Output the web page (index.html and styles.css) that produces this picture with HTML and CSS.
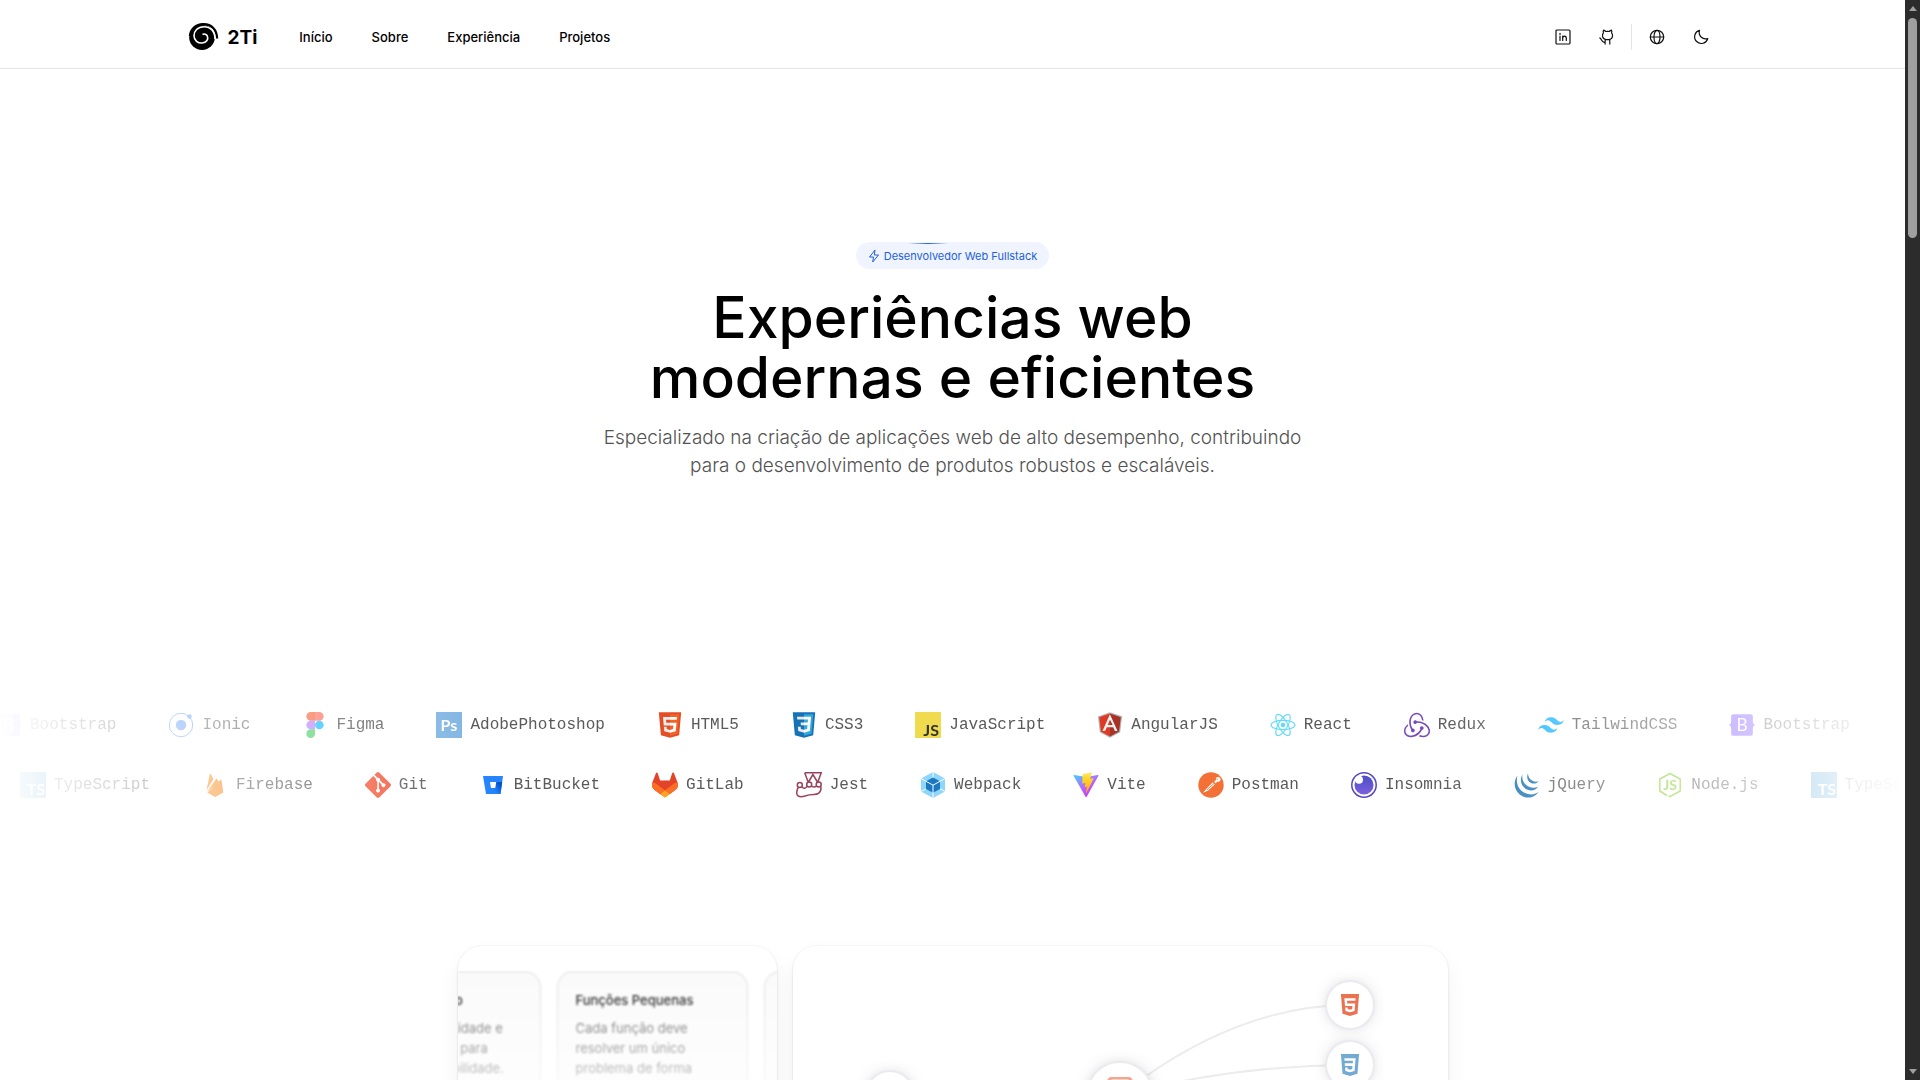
FILE: index.html
```
<!DOCTYPE html>
<html lang="pt-BR">
<head>
<meta charset="utf-8">
<meta name="viewport" content="width=device-width, initial-scale=1">
<title>2Ti</title>
<link rel="stylesheet" href="styles.css">
</head>
<body>
<svg class="sprite" aria-hidden="true">
  <defs>
    <linearGradient id="viteBody" x1="0" y1="0" x2="0.7" y2="1"><stop offset="0" stop-color="#41d1ff"/><stop offset="0.6" stop-color="#bd60fe"/><stop offset="1" stop-color="#bd34fe"/></linearGradient>
    <linearGradient id="viteBolt" x1="0" y1="0" x2="0" y2="1"><stop offset="0" stop-color="#ffea83"/><stop offset="0.2" stop-color="#ffdd35"/><stop offset="1" stop-color="#ffa800"/></linearGradient>
    <linearGradient id="insomniaFill" x1="0" y1="0" x2="0" y2="1"><stop offset="0" stop-color="#4a4fc4"/><stop offset="1" stop-color="#7d5fe0"/></linearGradient>
    <linearGradient id="bucketFill" x1="1" y1="0.3" x2="0.4" y2="0.8"><stop offset="0.1" stop-color="#0052cc"/><stop offset="1" stop-color="#2684ff"/></linearGradient>
  </defs>
  <symbol id="ionic" viewBox="0 0 26 26"><circle cx="13" cy="13" r="11.700" fill="none" stroke="#4f8ef7"/><circle cx="13" cy="13" r="5.200" fill="#4f8ef7"/><circle cx="21.500" cy="4.500" r="2.200" fill="#4f8ef7"/></symbol>
  <symbol id="figma" viewBox="0 0 26 26"><path fill="#f24e1e" fill-opacity=".85" d="M13 0H8.700a4.330 4.330 0 0 0 0 8.670H13z"/><path fill="#ff7262" d="M13 0h4.300a4.330 4.330 0 0 1 0 8.670H13z"/><path fill="#a259ff" fill-opacity=".75" d="M13 8.670H8.700a4.330 4.330 0 0 0 0 8.660H13z"/><circle cx="17.330" cy="13" r="4.330" fill="#1abcfe"/><path fill="#52cf72" d="M8.700 17.330H13v4.340a4.330 4.330 0 1 1-4.300-4.340z"/></symbol>
  <symbol id="html5" viewBox="0 0 128 128"><path fill="#E44D26" d="M19.037 113.876L9.032 1.661h109.936l-10.016 112.198-45.019 12.480z"/><path fill="#F16529" d="M64 116.800l36.378-10.086 8.559-95.878H64z"/><path fill="#EBEBEB" d="M64 52.455H45.788L44.530 38.361H64V24.599H29.489l.33 3.692 3.382 37.927H64zm0 35.743l-.061.017-15.327-4.140-.979-10.975H33.816l1.928 21.609 28.193 7.826.063-.017z"/><path fill="#fff" d="M63.952 52.455v13.763h16.947l-1.597 17.849-15.350 4.143v14.319l28.215-7.820.207-2.325 3.234-36.233.335-3.696h-3.708zm0-27.856v13.762h33.244l.276-3.092.628-6.978.329-3.692z"/></symbol>
  <symbol id="css3" viewBox="0 0 128 128"><path fill="#1572B6" d="M18.814 114.123L8.760 1.352h110.480l-10.064 112.754-45.243 12.543-45.119-12.526z"/><path fill="#33A9DC" d="M64.001 117.062l36.559-10.136 8.601-96.354h-45.160v106.490z"/><path fill="#fff" d="M64.001 51.429h18.302l1.264-14.163H64.001V23.435h34.682l-.332 3.711-3.400 38.114h-30.950V51.429z"/><path fill="#EBEBEB" d="M64.083 87.349l-.061.018-15.403-4.159-.985-11.031H33.752l1.937 21.717 28.331 7.863.063-.018v-14.390z"/><path fill="#fff" d="M81.127 64.675l-1.666 18.522-15.426 4.164v14.390l28.354-7.858.208-2.337 2.406-26.881H81.127z"/><path fill="#EBEBEB" d="M64.048 23.435v13.831H30.640l-.277-3.108-.630-7.012-.331-3.711h34.646zm-.047 27.996v13.831H48.792l-.277-3.108-.631-7.012-.330-3.711h16.447z"/></symbol>
  <symbol id="shield5" viewBox="0 0 22 24"><path fill="#e34f26" fill-opacity=".8" fill-rule="evenodd" d="M1 0h20l-1.800 21.500L11 24l-8.200-2.500zM4.800 4.500l.7 8.500h8.200l-.3 3.500-2.400.7-2.500-.7-.2-1.700H5.700l.3 3.700 5 1.500 5-1.500.8-8.200H8l-.2-3h9.100l.2-2.800z"/></symbol>
  <symbol id="shield3" viewBox="0 0 22 24"><path fill="#1572b6" fill-opacity=".6" fill-rule="evenodd" d="M1 0h20l-1.800 21.500L11 24l-8.200-2.500zM4.800 4.500l.2 2.800h9.300l-.3 2.700H5.200l.2 3h8.300l-.3 3.500-2.400.7-2.500-.7-.2-1.700H5.700l.3 3.700 5 1.500 5-1.500 1.200-14z"/></symbol>
  <symbol id="angular" viewBox="0 0 128 128"><path fill="#b3b3b3" d="M63.810 1.026L4.553 21.880l9.363 77.637 49.957 27.457 50.214-27.828L123.447 21.510z"/><path fill="#a83225" d="M117.536 25.998L63.672 7.629v112.785l45.141-24.983z"/><path fill="#dd3a26" d="M11.201 26.329l8.026 69.434 44.444 24.651V7.628z"/><path fill="#f2f2f2" d="M63.700 11.500L27 93l13.700-.300L48 74.600h32l8 18.600 13 .300zM63.700 37.600L77 63.700H52.700z" fill-rule="evenodd"/></symbol>
  <symbol id="react" viewBox="0 0 26 26"><g fill="none" stroke="#61dafb" stroke-width="1.100"><ellipse cx="13" cy="13" rx="12" ry="4.600"/><ellipse cx="13" cy="13" rx="12" ry="4.600" transform="rotate(60 13 13)"/><ellipse cx="13" cy="13" rx="12" ry="4.600" transform="rotate(120 13 13)"/></g><circle cx="13" cy="13" r="2.300" fill="#61dafb"/></symbol>
  <symbol id="redux" viewBox="0 0 24 24"><path fill="#764abc" d="M16.634 16.504c.87-.075 1.543-.84 1.500-1.754-.047-.914-.796-1.648-1.709-1.648h-.061c-.943.03-1.678.82-1.648 1.770.03.479.226.869.494 1.153-1.048 2.038-2.621 3.535-5.005 4.795-1.603.838-3.296 1.154-4.944.93-1.378-.195-2.456-.81-3.116-1.799-.988-1.499-1.078-3.116-.255-4.734.601-1.166 1.499-2.023 2.099-2.443-.15-.389-.33-1.048-.42-1.542-4.436 3.177-3.985 7.521-2.637 9.574 1.004 1.498 3.057 2.456 5.304 2.456.599 0 1.230-.044 1.843-.194 3.897-.749 6.848-3.086 8.541-6.532zm5.348-3.746c-2.320-2.728-5.738-4.226-9.634-4.226h-.51c-.253-.554-.837-.899-1.498-.899h-.045c-.943 0-1.678.81-1.647 1.753.03.898.794 1.648 1.708 1.648h.074c.675-.03 1.259-.45 1.498-1.049h.555c2.309 0 4.495.674 6.488 1.992 1.527 1.004 2.622 2.322 3.236 3.896.538 1.288.509 2.547-.045 3.597-.855 1.647-2.294 2.517-4.196 2.517-1.199 0-2.367-.375-2.967-.644-.36.298-.96.793-1.394 1.093 1.318.598 2.652.943 3.940.943 2.922 0 5.093-1.647 5.918-3.236.898-1.798.824-4.824-1.470-7.416zM6.490 17.042c.03.899.793 1.648 1.708 1.648h.06c.959-.03 1.693-.82 1.648-1.768 0-.9-.779-1.647-1.693-1.647h-.06c-.06 0-.149 0-.226.029-1.243-2.098-1.768-4.347-1.572-6.772.12-1.828.72-3.417 1.797-4.735.899-1.124 2.593-1.680 3.746-1.708 3.236-.061 4.585 3.971 4.689 5.574l1.498.45c-.345-4.914-3.400-7.492-6.322-7.492-2.742 0-5.273 1.993-6.293 4.915-1.393 3.896-.479 7.641 1.229 10.638-.149.195-.239.539-.209.868z"/></symbol>
  <symbol id="tailwind" viewBox="0 0 24 24"><path fill="#19b5fe" d="M12.001 4.800c-3.200 0-5.200 1.600-6 4.800 1.200-1.600 2.600-2.200 4.200-1.800.913.228 1.565.89 2.288 1.624C13.666 10.618 15.027 12 18.001 12c3.200 0 5.200-1.600 6-4.800-1.200 1.600-2.600 2.200-4.200 1.800-.913-.228-1.565-.89-2.288-1.624C16.337 6.182 14.976 4.800 12.001 4.800zM6.001 12c-3.200 0-5.200 1.600-6 4.800 1.200-1.600 2.600-2.200 4.200-1.800.913.228 1.565.89 2.288 1.624 1.177 1.194 2.538 2.576 5.512 2.576 3.200 0 5.200-1.600 6-4.800-1.200 1.600-2.600 2.200-4.200 1.800-.913-.228-1.565-.89-2.288-1.624C10.337 13.382 8.976 12 6.001 12z"/></symbol>
  <symbol id="firebase" viewBox="0 0 26 26"><path fill="#f5820b" d="M4.500 18.500L7.700 2.200q.5-1 1.100 0L11.500 7zM5 19.800L14.200 7q.5-.9 1 0l1.500 3zM5.300 20.600L18.500 7.700q.8-.5 1 .4l1.800 12.500-7.200 3.800q-1 .5-2 0z"/></symbol>
  <symbol id="git" viewBox="0 0 24 24"><path fill="#f3583a" d="M23.546 10.930L13.067.452c-.604-.603-1.582-.603-2.188 0L8.708 2.627l2.760 2.760c.645-.215 1.379-.07 1.889.441.516.515.658 1.258.438 1.900l2.658 2.660c.645-.223 1.387-.078 1.900.435.721.72.721 1.884 0 2.604-.719.719-1.881.719-2.600 0-.539-.541-.674-1.337-.404-1.996L12.860 8.955v6.525c.176.086.342.203.488.348.713.721.713 1.883 0 2.600-.719.721-1.889.721-2.609 0-.719-.719-.719-1.879 0-2.598.182-.18.387-.316.605-.406V8.835c-.217-.091-.424-.222-.6-.401-.545-.545-.676-1.342-.396-2.009L7.636 3.700.45 10.881c-.6.605-.6 1.584 0 2.189l10.480 10.477c.604.604 1.582.604 2.186 0l10.430-10.430c.605-.603.605-1.582 0-2.187"/></symbol>
  <symbol id="bitbucket" viewBox="0 0 26 26"><path fill="#2684ff" d="M3 4h20l-2.500 18H6z"/><path fill="url(#bucketFill)" d="M22.200 10h-6l-1 6-5.200 6h10.500z"/><path fill="#fff" d="M10 10h6.200l-1 6h-4.200z"/></symbol>
  <symbol id="gitlab" viewBox="0 0 25 24"><path fill="#e24329" d="M24.507 9.500l-.034-.09L21.082.562a.896.896 0 0 0-1.694.091l-2.290 7.010H7.825L5.535.653a.898.898 0 0 0-1.694-.09L.451 9.411.416 9.500a6.297 6.297 0 0 0 2.090 7.278l5.202 3.899 4.742 3.100 4.743-3.100 5.225-3.900A6.297 6.297 0 0 0 24.507 9.500z"/><path fill="#fc6d26" d="M24.507 9.500l-.034-.09a11.440 11.440 0 0 0-4.560 2.051l-7.447 5.632 4.742 3.584 5.211-3.900A6.297 6.297 0 0 0 24.507 9.500z"/><path fill="#fca326" d="M7.707 20.677l4.115 3.111a1.051 1.051 0 0 0 1.268 0l4.115-3.111-4.743-3.584z"/><path fill="#fc6d26" d="M5.010 11.461a11.430 11.430 0 0 0-4.560-2.050L.416 9.500a6.297 6.297 0 0 0 2.090 7.278l5.202 3.899 4.745-3.584z"/></symbol>
  <symbol id="jest" viewBox="0 0 26 26"><g fill="none" stroke="#99425b" stroke-width="1.500"><path d="M8.700.8h16.500l-3.500 9.800M8.700.8l3.700 10M12.500 10l4.400-7.500 4.600 7.500"/><circle cx="3.800" cy="13" r="2.500"/><circle cx="13.200" cy="12.600" r="2.500"/><circle cx="22.700" cy="12.600" r="2.500"/><path d="M2.500 15Q0 19 1 22.500q1.500 3.500 8 1.500 4-1.500 9-1.500 6 0 7-5.500.3-2-1-3M11.200 14Q9 18 5.700 15M15.500 14q2.500 2 5 0"/></g></symbol>
  <symbol id="webpack" viewBox="0 0 26 26"><path fill="#8ed6fb" d="M13 0l12 6.500v13L13 26 1 19.500v-13z"/><path fill="#1c78c0" d="M13 5.500l7 3.800v7.600l-7 3.800-7-3.800V9.300z"/><path fill="none" stroke="#fff" d="M1 6.500l12 6.700 12-6.700M13 13.200V26M13 0v5.500M1 19.500l5-2.700M25 19.500l-5-2.700"/></symbol>
  <symbol id="vite" viewBox="0 0 410 404"><path fill="url(#viteBody)" d="M399.641 59.525L215.643 388.545C211.844 395.338 202.084 395.378 198.228 388.618L10.582 59.556C6.381 52.190 12.680 43.267 21.028 44.759L205.223 77.682C206.398 77.892 207.601 77.890 208.776 77.676L389.119 44.806C397.439 43.289 403.768 52.143 399.641 59.525Z"/><path fill="url(#viteBolt)" d="M292.965 1.574L156.801 28.255C154.563 28.694 152.906 30.590 152.771 32.866L144.395 174.330C144.198 177.662 147.258 180.248 150.510 179.498L188.420 170.749C191.967 169.931 195.172 173.055 194.443 176.622L183.180 231.775C182.422 235.487 185.907 238.661 189.532 237.560L212.947 230.446C216.577 229.344 220.065 232.527 219.297 236.242L201.398 322.875C200.278 328.294 207.486 331.249 210.492 326.603L212.500 323.500L323.454 102.072C325.312 98.365 322.108 94.137 318.036 94.923L279.014 102.454C275.347 103.161 272.227 99.746 273.262 96.158L298.731 7.867C299.767 4.273 296.636.855 292.965 1.574Z"/></symbol>
  <symbol id="postman" viewBox="0 0 26 26"><circle cx="13" cy="13" r="12.700" fill="#f37036"/><path fill="#fff" d="M5 20.800l3-3.600 6.800-6.900 2 1.900-6.900 6.500zM16 9.300l2-1a2.400 2.400 0 1 1 1.300 1.300l-1.600 1.900z"/><path fill="none" stroke="#f37036" stroke-width=".8" d="M9 17.800l7-6.500M18.500 7.500l1.500-.5"/></symbol>
  <symbol id="insomnia" viewBox="0 0 26 26"><circle cx="13" cy="13" r="12.200" fill="#fff" stroke="#5849be" stroke-width="1.500"/><circle cx="13" cy="13" r="9.500" fill="url(#insomniaFill)"/><circle cx="8" cy="7.800" r="4" fill="#fff"/></symbol>
  <symbol id="jquery" viewBox="0 0 26 26"><g fill="#1b75b2"><path d="M3.500 3.500C-2 11 1 21 9 24.500c6 2.600 12.500.3 15.500-4.500-4 3-9 3.200-13.500 1C4 17.500 1.500 10.500 3.500 3.500z"/><path d="M8.500 2.500C5 8 7.500 15 13 17.500c4.500 2 9 .5 11-2.800-3 1.500-6 1.500-9.500-.2C9.500 12 7.500 7.500 8.500 2.500z"/><path d="M14 1.500c-2 4 0 8 3 9.500 3 1.200 6 .5 7.500-1.700-2 .7-4 .5-6-.5C15.500 7.200 14 4.500 14 1.500z"/></g></symbol>
</svg>

<div class="window">
  <div class="page">
    <header class="site-header">
      <div class="header-inner">
        <a class="brand" href="#">
          <svg viewBox="4 4 32 30" aria-hidden="true"><ellipse cx="18" cy="19.500" rx="12.800" ry="12.500"/><path d="M6 18A12.800 13 0 0 1 19 6.200C27.500 5.800 33 12 33 20.500" fill="none" stroke="#000" stroke-width="2.400"/><path d="M31 21C31 13.500 26.500 8.700 20 8.700 13.500 8.700 10 13 10 17.800c0 4.700 4 7.600 8.300 7.200 4-.4 6.200-3.600 5.200-6.500-.7-2.300-3.300-3.200-5-2" fill="none" stroke="#fff" stroke-width="1.600"/></svg>
          <span>2Ti</span>
        </a>
        <nav class="main-nav">
          <a href="#">Início</a>
          <a href="#">Sobre</a>
          <a href="#">Experiência</a>
          <a href="#">Projetos</a>
        </nav>
        <div class="actions">
          <a class="icon-btn" href="#" aria-label="LinkedIn"><svg viewBox="0 0 16 16"><rect x="1" y="1" width="14" height="14" rx="1"/><path d="M5 7v4.500M5 4.300v1.200M7.700 7v4.500M7.700 9.200c0-2.800 3.600-2.800 3.600 0v2.300"/></svg></a>
          <a class="icon-btn" href="#" aria-label="GitHub"><svg viewBox="1 0 16 16"><path d="M5.500 1.200c1 .2 1.700.7 2.300 1.300q1.700-.4 3.400 0c.6-.6 1.300-1.100 2.300-1.300.4 1 .4 1.900.1 2.700.8 1 1.200 2.100.9 3.500-.4 2-2 3-3.500 3.200H8C6.500 10.400 4.900 9.400 4.500 7.400c-.2-1.400.1-2.500.9-3.500-.3-.8-.3-1.700.1-2.700zM11.300 10.600q.5.500.5 1.500v3M7.700 10.600q-.6.600-.6 1.500v3M7 13.200c-3.500.8-2.800-3.200-5.200-4.300"/></svg></a>
          <span class="divider"></span>
          <button class="icon-btn" type="button" aria-label="Idioma"><svg viewBox="0 0 16 16"><circle cx="8" cy="8" r="6.700"/><ellipse cx="8" cy="8" rx="3" ry="6.700"/><path d="M1.300 8h13.400"/></svg></button>
          <button class="icon-btn" type="button" aria-label="Tema escuro"><svg viewBox="0 0 16 16"><path d="M6.500 1.300A6.700 6.700 0 1 0 14.800 9.500C9.500 11 5 6.700 6.500 1.300z"/></svg></button>
        </div>
      </div>
    </header>

    <main>
      <section class="hero">
        <p class="badge"><svg viewBox="0 0 12 14" aria-hidden="true"><path d="M7 1L1.500 8H5.500L4.700 13 10.500 6H6.300z"/></svg>Desenvolvedor Web Fullstack</p>
        <h1>Experiências web<br>modernas e eficientes</h1>
        <p class="lead">Especializado na criação de aplicações web de alto desempenho, contribuindo<br>para o desenvolvimento de produtos robustos e escaláveis.</p>
      </section>

      <section class="marquee" aria-label="Tecnologias">
        <ul class="track track-first">
          <li><svg viewBox="1 1 24 24"><path fill="#7748ff" d="M5 3h16q2 0 2 2v5q0 2 2 3q-2 1-2 3v5q0 2-2 2H5q-2 0-2-2v-5q0-2-2-3q2-1 2-3V5q0-2 2-2z"/><text class="glyph glyph-light" x="13" y="19" text-anchor="middle">B</text></svg>Bootstrap</li>
          <li><svg><use href="#ionic"/></svg>Ionic</li>
          <li><svg><use href="#figma"/></svg>Figma</li>
          <li><svg viewBox="0 0 26 26"><path fill="#80b5e2" d="M0 0h26v26H0z"/><text class="glyph" x="13" y="19" text-anchor="middle">Ps</text></svg>AdobePhotoshop</li>
          <li><svg><use href="#html5"/></svg>HTML5</li>
          <li><svg><use href="#css3"/></svg>CSS3</li>
          <li><svg viewBox="0 0 26 26"><path fill="#f0db4f" d="M0 0h26v26H0z"/><text class="glyph glyph-dark" x="24" y="24" text-anchor="end">JS</text></svg>JavaScript</li>
          <li><svg><use href="#angular"/></svg>AngularJS</li>
          <li><svg><use href="#react"/></svg>React</li>
          <li><svg><use href="#redux"/></svg>Redux</li>
          <li><svg><use href="#tailwind"/></svg>TailwindCSS</li>
          <li><svg viewBox="1 1 24 24"><path fill="#7748ff" d="M5 3h16q2 0 2 2v5q0 2 2 3q-2 1-2 3v5q0 2-2 2H5q-2 0-2-2v-5q0-2-2-3q2-1 2-3V5q0-2 2-2z"/><text class="glyph glyph-light" x="13" y="19" text-anchor="middle">B</text></svg>Bootstrap</li>
        </ul>
        <ul class="track track-second">
          <li><svg viewBox="0 0 26 26"><path fill="#2a8fd0" d="M0 0h26v26H0z"/><text class="glyph" x="25" y="23" text-anchor="end">TS</text></svg>TypeScript</li>
          <li><svg><use href="#firebase"/></svg>Firebase</li>
          <li><svg><use href="#git"/></svg>Git</li>
          <li><svg><use href="#bitbucket"/></svg>BitBucket</li>
          <li><svg><use href="#gitlab"/></svg>GitLab</li>
          <li><svg><use href="#jest"/></svg>Jest</li>
          <li><svg><use href="#webpack"/></svg>Webpack</li>
          <li><svg><use href="#vite"/></svg>Vite</li>
          <li><svg><use href="#postman"/></svg>Postman</li>
          <li><svg><use href="#insomnia"/></svg>Insomnia</li>
          <li><svg><use href="#jquery"/></svg>jQuery</li>
          <li><svg viewBox="0 0 26 26"><path fill="none" stroke="#83cd29" stroke-width="1.500" stroke-linejoin="round" d="M10 23.500L2.800 19V7L13 1.500 23.200 7v12L13 24.700l-1.500-.8"/><text class="glyph glyph-green" x="13" y="18" text-anchor="middle">JS</text></svg>Node.js</li>
          <li><svg viewBox="0 0 26 26"><path fill="#2a8fd0" d="M0 0h26v26H0z"/><text class="glyph" x="25" y="23" text-anchor="end">TS</text></svg>TypeScript</li>
        </ul>
      </section>

      <section class="bento">
        <article class="panel panel-notes">
          <div class="notes">
            <div class="note"><h3>Documentação</h3><p>Garanta a qualidade e<br>a consistência para<br>boa manutenibilidade.</p></div>
            <div class="note"><h3>Funções Pequenas</h3><p>Cada função deve<br>resolver um único<br>problema de forma</p></div>
            <div class="note"></div>
          </div>
        </article>
        <article class="panel panel-stack">
          <div class="diagram">
            <svg class="beams" viewBox="0 0 510 230" preserveAspectRatio="none" aria-hidden="true"><path d="M25 115H255M255 115Q370 25 485 25M255 115Q370 85 485 85M255 115Q370 145 485 145M255 115Q370 205 485 205"/></svg>
            <span class="node"></span>
            <span class="node node-large"><svg viewBox="0 0 36 36" aria-hidden="true"><rect x="6" y="1" width="24" height="34" rx="5"/><path d="M18 4v28"/></svg></span>
            <div class="node-column">
              <span class="node"><svg><use href="#shield5"/></svg></span>
              <span class="node"><svg><use href="#shield3"/></svg></span>
              <span class="node"></span>
              <span class="node"></span>
            </div>
          </div>
        </article>
      </section>
    </main>
  </div>
  <div class="scrollbar" aria-hidden="true">
    <span class="arrow arrow-up"></span>
    <span class="thumb"></span>
    <span class="arrow arrow-down"></span>
  </div>
</div>
</body>
</html>
```
FILE: styles.css
```
* { box-sizing: border-box; }
body {
  margin: 0;
  font-family: Inter, "Open Sans", sans-serif;
  color: #000;
  background: #fff;
}
h1, h3, p, ul { margin: 0; padding: 0; }
a { color: inherit; text-decoration: none; }
.sprite { display: block; width: 0; height: 0; }

.window {
  display: grid;
  grid-template-columns: minmax(0, 1fr) 15px;
  height: 100vh;
  overflow: hidden;
}
.page { overflow: hidden; }

/* header */
.site-header { border-bottom: 1px solid #e4e4ec; }
.header-inner {
  display: flex;
  align-items: center;
  max-width: 1536px;
  height: 68px;
  margin: 0 auto;
  padding-top: 6px;
  padding-left: 3px;
}
.brand {
  display: flex;
  align-items: center;
  gap: 8px;
  font-size: 19px;
  font-weight: 700;
}
.brand svg { width: 32px; height: 30px; }
.main-nav {
  display: flex;
  gap: 39px;
  margin-left: 42px;
  font-size: 13px;
  font-weight: 500;
}
.actions {
  display: flex;
  align-items: center;
  gap: 4px;
  margin-left: auto;
}
.icon-btn {
  display: grid;
  place-items: center;
  width: 40px;
  height: 40px;
  padding: 0;
  border: 0;
  background: none;
}
.icon-btn svg {
  width: 16px;
  height: 16px;
  fill: none;
  stroke: #111;
  stroke-width: 1.2;
  stroke-linecap: round;
  stroke-linejoin: round;
}
.divider { width: 1px; height: 26px; margin-right: 1px; background: #e4e4e7; }

/* hero */
.hero {
  display: flex;
  flex-direction: column;
  align-items: center;
  padding-top: 173px;
  text-align: center;
}
.badge {
  position: relative;
  display: flex;
  align-items: center;
  gap: 4px;
  height: 27px;
  padding: 0 12px;
  border-radius: 14px;
  background: #eff4ff;
  color: #2460d8;
  font-size: 11px;
}
.badge::before {
  content: "";
  position: absolute;
  top: 1px;
  left: 52px;
  width: 40px;
  height: 1px;
  background: linear-gradient(to right, transparent, #2460d8, transparent);
}
.badge svg { width: 12px; height: 14px; fill: none; stroke: currentColor; stroke-linejoin: round; }
h1 {
  margin-top: 19px;
  font-size: 57px;
  font-weight: 500;
  line-height: 60px;
}
.lead {
  margin-top: 16px;
  color: #525252;
  font-size: 19px;
  font-weight: 300;
  line-height: 28px;
}

/* technologies */
.marquee {
  display: grid;
  gap: 34px;
  margin-top: 232px;
  overflow: hidden;
  -webkit-mask-image: linear-gradient(to right, transparent, #000 25%, #000 75%, transparent);
  mask-image: linear-gradient(to right, transparent, #000 25%, #000 75%, transparent);
}
.track {
  display: flex;
  gap: 52px;
  list-style: none;
  color: #5a5a5a;
  font-family: "Liberation Mono", monospace;
  font-size: 16px;
  line-height: 24px;
}
.track-first { margin-left: -4px; }
.track-second { margin-left: 20px; }
.track li { display: flex; align-items: center; flex: none; gap: 8px; height: 26px; }
.track svg { width: 26px; height: 26px; }
.glyph { fill: #fff; font-family: Lato, "Open Sans", sans-serif; font-size: 16px; font-weight: 700; }
.glyph-light { font-weight: 400; }
.glyph-dark { fill: #323330; }
.glyph-green { fill: #83cd29; font-size: 14px; }

/* cards */
.bento {
  display: grid;
  grid-template-columns: repeat(3, minmax(0, 1fr));
  gap: 16px;
  max-width: 990px;
  margin: 148px auto 0;
}
.panel {
  height: 352px;
  overflow: hidden;
  border-radius: 24px;
  background: #fff;
  box-shadow: 0 0 0 1px rgba(0, 0, 0, .03), 0 2px 4px rgba(0, 0, 0, .05), 0 12px 24px rgba(0, 0, 0, .05);
}
.panel-stack { grid-column: span 2; padding: 34px 72px; }
.notes {
  display: flex;
  gap: 16px;
  margin-top: 25px;
  margin-left: -108px;
  -webkit-mask-image: linear-gradient(#000, transparent 160px);
  mask-image: linear-gradient(#000, transparent 160px);
}
.note {
  flex: none;
  width: 191px;
  height: 176px;
  padding: 18px;
  border: 1px solid #dcdcdc;
  border-radius: 16px;
  background: #fafafa;
  filter: blur(1px);
}
.note h3 { font-size: 13px; font-weight: 500; line-height: 20px; }
.note p { margin-top: 8px; color: #525252; font-size: 13px; line-height: 20px; }

.diagram {
  position: relative;
  display: flex;
  align-items: center;
  justify-content: space-between;
  height: 230px;
}
.beams {
  position: absolute;
  inset: 0;
  width: 100%;
  height: 100%;
  fill: none;
  stroke: #ececec;
  stroke-width: 2;
}
.node-column { display: grid; gap: 10px; }
.node {
  position: relative;
  display: grid;
  place-items: center;
  width: 50px;
  height: 50px;
  border: 2px solid #eaeaf0;
  border-radius: 50%;
  background: #fff;
  box-shadow: 0 0 20px -12px rgba(0, 0, 0, .8);
}
.node svg { width: 20px; height: 22px; }
.node-large { width: 68px; height: 68px; }
.node-large svg { width: 36px; height: 36px; fill: none; stroke: #f7a391; stroke-width: 3; }

/* scroll bar */
.scrollbar {
  display: flex;
  flex-direction: column;
  align-items: center;
  padding: 6px 0;
  background: #2c2c2c;
}
.thumb { width: 9px; height: 220px; margin-top: 7px; border-radius: 5px; background: #9f9f9f; }
.arrow { border: 4px solid transparent; }
.arrow-up { border-top: 0; border-bottom: 5px solid #9f9f9f; }
.arrow-down { margin-top: auto; border-bottom: 0; border-top: 5px solid #9f9f9f; }
```
